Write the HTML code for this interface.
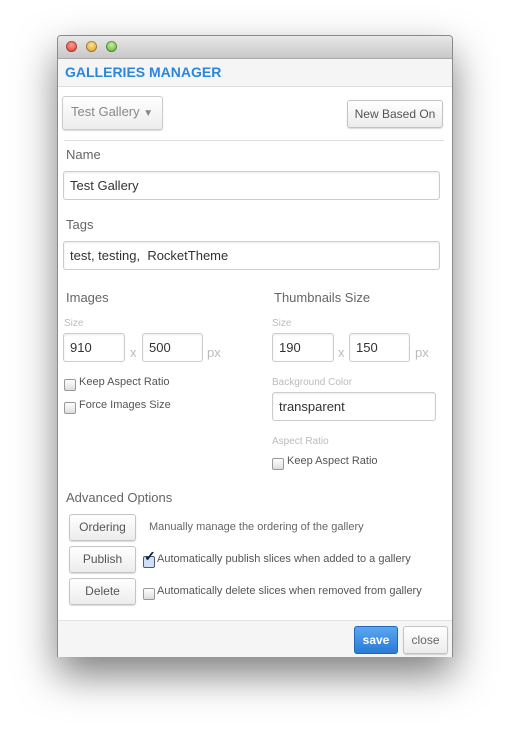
<!DOCTYPE html>
<html><head><style>
body{margin:0;width:510px;height:737px;background:#fff;font-family:"Liberation Sans",sans-serif;position:relative;overflow:hidden}
.a{position:absolute}
.win{left:57px;top:35px;width:396px;height:622px;background:#fff;border:1px solid #8a8a8a;box-sizing:border-box;box-shadow:0 18px 40px rgba(0,0,0,.5);border-radius:4px 4px 0 0;overflow:hidden}
.tb{left:0;top:0;width:100%;height:22px;background:linear-gradient(#e8e8e8,#c8c8c8);border-bottom:1px solid #aaa}
.dot{width:11px;height:11px;border-radius:50%;top:5px;box-shadow:inset 0 0 0 1px rgba(0,0,0,.3)}
.hd{left:0;top:23px;width:100%;height:27px;background:#f5f5f5;border-bottom:1px solid #ddd;color:#2b86d9;font-weight:bold;font-size:14px;line-height:27px;text-indent:7px}
.inp{border:1px solid #ccc;border-radius:3px;box-sizing:border-box;background:#fff;font-size:13px;color:#333;padding-left:6px;line-height:27px;box-shadow:inset 0 1px 2px rgba(0,0,0,.08)}
.lb{font-size:13px;color:#666}
.sm{font-size:10px;color:#bbb}
.px{font-size:13px;color:#bbb}
.cb{width:10px;height:10px;border:1px solid #999;border-radius:2px;background:linear-gradient(#fff,#ddd)}
.ct{font-size:11px;color:#555}
.btn{border:1px solid #c4c4c4;border-radius:3px;box-sizing:border-box;background:linear-gradient(#fff,#ececec);font-size:12px;color:#555;text-align:center;box-shadow:0 1px 1px rgba(0,0,0,.15)}
</style></head><body>
<div class="a win">
<div class="a tb"></div>
<div class="a dot" style="left:8px;background:radial-gradient(circle at 50% 35%,#ff9a90,#d9332a)"></div>
<div class="a dot" style="left:28px;background:radial-gradient(circle at 50% 35%,#ffe08a,#d99520)"></div>
<div class="a dot" style="left:48px;background:radial-gradient(circle at 50% 35%,#c4ef9a,#56a830)"></div>
<div class="a hd">GALLERIES MANAGER</div>
</div>
<div class="a btn" style="left:62px;top:96px;width:101px;height:34px;line-height:30px;font-size:13px;color:#888;text-align:left;padding-left:8px;border-color:#ccc">Test Gallery <span style="font-size:10px">▼</span></div>
<div class="a btn" style="left:347px;top:100px;width:96px;height:28px;line-height:26px">New Based On</div>
<div class="a" style="left:64px;top:140px;width:380px;height:1px;background:#ddd"></div>
<div class="a lb" style="left:66px;top:147px">Name</div>
<div class="a inp" style="left:63px;top:171px;width:377px;height:29px">Test Gallery</div>
<div class="a lb" style="left:66px;top:217px">Tags</div>
<div class="a inp" style="left:63px;top:241px;width:377px;height:29px">test, testing,&nbsp; RocketTheme</div>
<div class="a lb" style="left:66px;top:290px">Images</div>
<div class="a lb" style="left:274px;top:290px">Thumbnails Size</div>
<div class="a sm" style="left:64px;top:318px">Size</div>
<div class="a sm" style="left:272px;top:318px">Size</div>
<div class="a inp" style="left:63px;top:333px;width:62px;height:29px">910</div>
<div class="a px" style="left:130px;top:345px">x</div>
<div class="a inp" style="left:142px;top:333px;width:61px;height:29px">500</div>
<div class="a px" style="left:207px;top:345px">px</div>
<div class="a inp" style="left:272px;top:333px;width:62px;height:29px">190</div>
<div class="a px" style="left:338px;top:345px">x</div>
<div class="a inp" style="left:349px;top:333px;width:61px;height:29px">150</div>
<div class="a px" style="left:415px;top:345px">px</div>
<div class="a cb" style="left:64px;top:379px"></div><div class="a ct" style="left:79px;top:376px">Keep Aspect Ratio</div>
<div class="a cb" style="left:64px;top:402px"></div><div class="a ct" style="left:79px;top:399px">Force Images Size</div>
<div class="a sm" style="left:272px;top:377px">Background Color</div>
<div class="a inp" style="left:272px;top:392px;width:164px;height:29px">transparent</div>
<div class="a sm" style="left:272px;top:436px">Aspect Ratio</div>
<div class="a cb" style="left:272px;top:458px"></div><div class="a ct" style="left:287px;top:455px">Keep Aspect Ratio</div>
<div class="a lb" style="left:66px;top:490px">Advanced Options</div>
<div class="a btn" style="left:69px;top:514px;width:67px;height:27px;line-height:25px">Ordering</div>
<div class="a ct" style="left:149px;top:521px;color:#666">Manually manage the ordering of the gallery</div>
<div class="a btn" style="left:69px;top:546px;width:67px;height:27px;line-height:25px">Publish</div>
<div class="a cb" style="left:143px;top:556px;background:#cfe0f5;border-color:#557"></div>
<div class="a" style="left:144px;top:548px;font-size:14px;color:#123;font-weight:bold">✓</div>
<div class="a ct" style="left:157px;top:553px">Automatically publish slices when added to a gallery</div>
<div class="a btn" style="left:69px;top:578px;width:67px;height:27px;line-height:25px">Delete</div>
<div class="a cb" style="left:143px;top:588px"></div>
<div class="a ct" style="left:157px;top:585px">Automatically delete slices when removed from gallery</div>
<div class="a" style="left:58px;top:620px;width:394px;height:36px;background:#f5f5f5;border-top:1px solid #e2e2e2"></div>
<div class="a" style="left:354px;top:626px;width:44px;height:28px;border-radius:3px;background:linear-gradient(#5aa8f0,#2a7ad8);border:1px solid #2366b5;box-sizing:border-box;color:#fff;font-weight:bold;font-size:12px;text-align:center;line-height:26px">save</div>
<div class="a btn" style="left:403px;top:626px;width:45px;height:28px;line-height:26px;color:#666">close</div>
</body></html>
